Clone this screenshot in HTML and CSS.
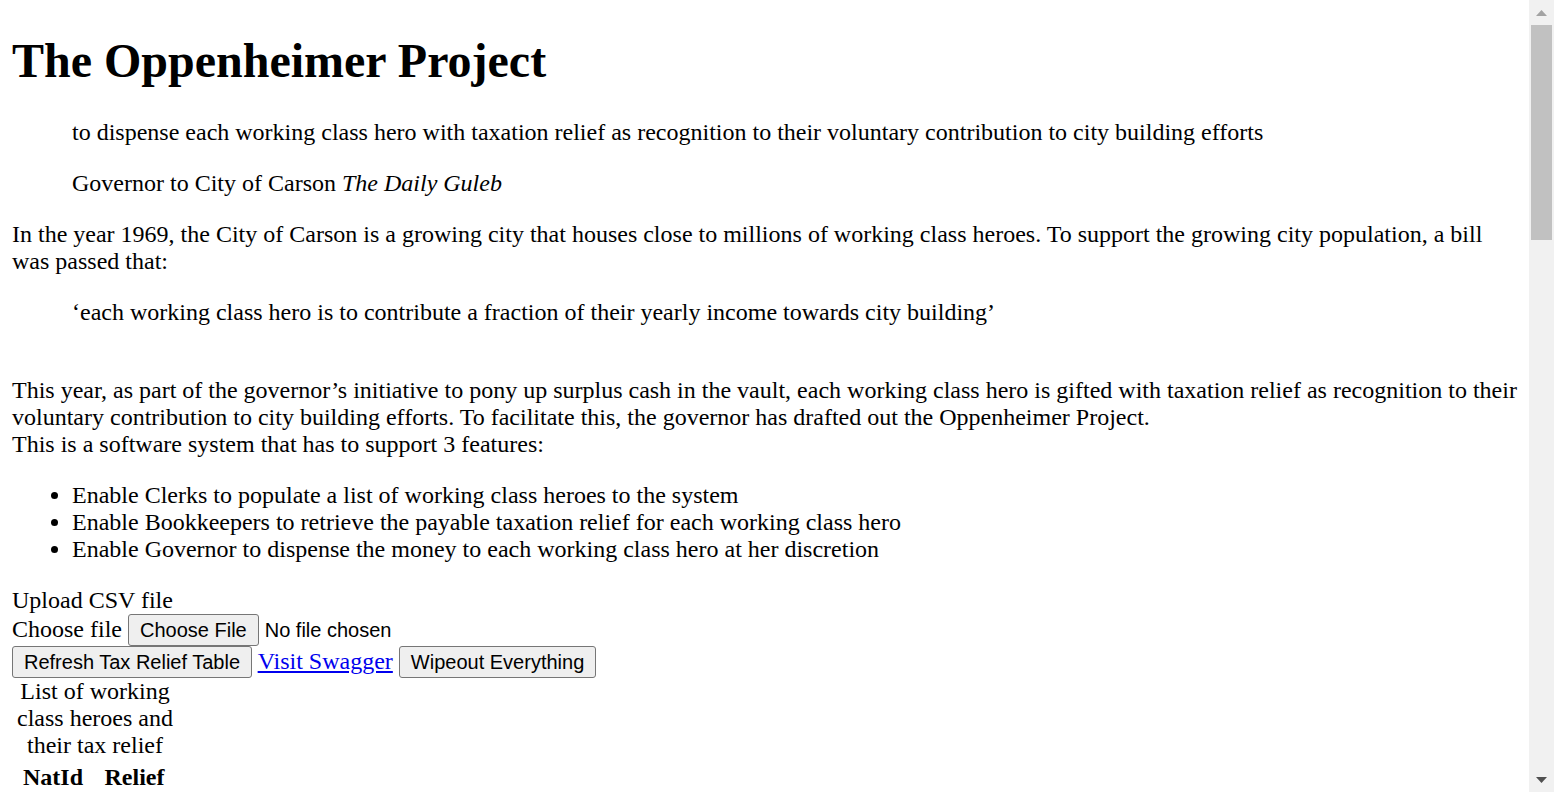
FILE: index.html
```html
<!DOCTYPE html>
<html lang="en">
<head>
<meta charset="utf-8">
<title>The Oppenheimer Project</title>
<link rel="stylesheet" href="styles.css">
</head>
<body class="window">
<div class="viewport">
<main class="page">
  <h1 class="title">The Oppenheimer Project</h1>
  <blockquote class="quote">
    <p>to dispense each working class hero with taxation relief as recognition to their voluntary contribution to city building efforts</p>
    <p>Governor to City of Carson <cite>The Daily Guleb</cite></p>
  </blockquote>
  <p>In the year 1969, the City of Carson is a growing city that houses close to millions of working class heroes. To support the growing city population, a bill was passed that:</p>
  <blockquote class="quote">
    <p>‘each working class hero is to contribute a fraction of their yearly income towards city building’</p>
  </blockquote>
  <p><br>This year, as part of the governor’s initiative to pony up surplus cash in the vault, each working class hero is gifted with taxation relief as recognition to their voluntary contribution to city building efforts. To facilitate this, the governor has drafted out the Oppenheimer Project.<br>This is a software system that has to support 3 features:</p>
  <ul class="features">
    <li>Enable Clerks to populate a list of working class heroes to the system</li>
    <li>Enable Bookkeepers to retrieve the payable taxation relief for each working class hero</li>
    <li>Enable Governor to dispense the money to each working class hero at her discretion</li>
  </ul>
  <form class="upload">
    <div class="upload-title">Upload CSV file</div>
    <div class="upload-row">
      <label for="csv">Choose file</label>
      <input class="file" id="csv" type="file" accept=".csv">
    </div>
    <div class="actions">
      <button type="button" class="btn">Refresh Tax Relief Table</button>
      <a class="link" href="#swagger">Visit Swagger</a>
      <button type="button" class="btn">Wipeout Everything</button>
    </div>
  </form>
  <table class="relief">
    <caption>List of working class heroes and their tax relief</caption>
    <thead>
      <tr><th class="col-id">NatId</th><th class="col-relief">Relief</th></tr>
    </thead>
    <tbody></tbody>
  </table>
</main>
</div>
<div class="scrollbar" aria-hidden="true">
  <span class="sb-arrow">
    <svg width="11" height="6" viewBox="0 0 11 6"><path d="M0 6 L5.5 0 L11 6 Z" fill="#a3a3a3"/></svg>
  </span>
  <span class="sb-track"><span class="sb-thumb"></span></span>
  <span class="sb-arrow">
    <svg width="11" height="6" viewBox="0 0 11 6"><path d="M0 0 L11 0 L5.5 6 Z" fill="#505050"/></svg>
  </span>
</div>
</body>
</html>
```

FILE: styles.css
```css
html {
  background: #ffffff;
}

body {
  margin: 0;
  font-family: "Liberation Serif", "Times New Roman", serif;
  font-size: 24px;
  color: #000000;
}

.window {
  height: 100vh;
  display: grid;
  grid-template-columns: 1fr 25px;
  overflow: hidden;
}

.viewport {
  overflow: hidden;
  padding: 12px;
  min-width: 0;
}

p {
  margin: 24px 0;
}

.title {
  font-size: 48px;
  font-weight: bold;
  margin: 21px 0 31px;
}

.quote {
  margin: 24px 60px;
}

.quote cite {
  font-style: italic;
}

.features {
  margin: 24px 0;
  padding-left: 60px;
  list-style: disc;
}

.upload {
  margin: 0;
}

.btn,
.file::file-selector-button {
  font-family: "Liberation Sans", Arial, sans-serif;
  font-size: 20px;
  color: #000000;
  background: #efefef;
  border: 1.5px solid #767676;
  border-radius: 3px;
  padding: 1.5px 11px;
  margin: 0;
  height: 32px;
  vertical-align: baseline;
}

.file {
  font-family: "Liberation Sans", Arial, sans-serif;
  font-size: 20px;
  color: #000000;
}

.file::file-selector-button {
  margin-right: 6px;
}

.link {
  color: #0000ee;
  text-decoration: underline;
}

.relief {
  border-collapse: separate;
  border-spacing: 3px;
}

.relief caption {
  text-align: center;
}

.relief th {
  padding: 1.5px;
  font-weight: bold;
  text-align: center;
}

.col-id {
  width: 73px;
}

.col-relief {
  width: 78px;
}

/* window scrollbar */
.scrollbar {
  display: flex;
  flex-direction: column;
  background: #f1f1f1;
}

.sb-arrow {
  height: 25px;
  flex: none;
  display: flex;
  align-items: center;
  justify-content: center;
}

.sb-arrow svg {
  display: block;
}

.sb-track {
  flex: 1;
  padding: 0 2px;
}

.sb-thumb {
  display: block;
  height: 215px;
  background: #c1c1c1;
}
```
